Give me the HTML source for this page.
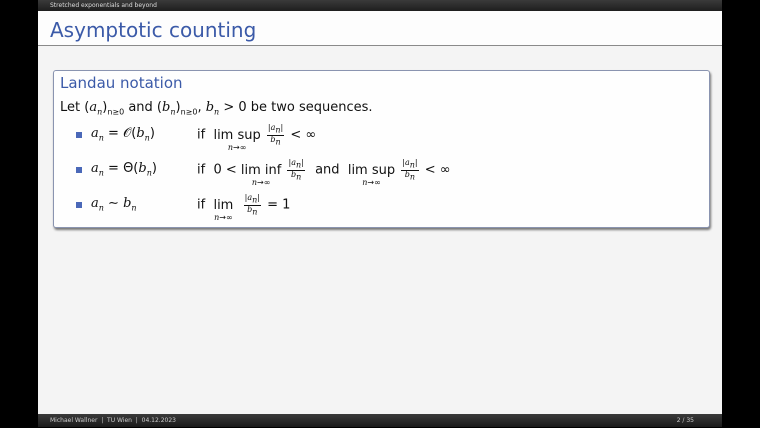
<!DOCTYPE html>
<html><head><meta charset="utf-8"><style>
*{margin:0;padding:0;box-sizing:border-box}
body{width:760px;height:427px;background:#000;position:relative;overflow:hidden;font-family:"DejaVu Sans","Liberation Sans",sans-serif}
#slide{position:absolute;left:38px;top:0;width:684px;height:427px;background:#f4f4f4}
#top{position:absolute;left:0;top:0;width:684px;height:11px;background:linear-gradient(#3a3a3a,#1e1e1e);color:#ddd;font-size:6px;line-height:11px;padding-left:12px}
#title{position:absolute;left:0;top:11px;width:684px;height:35px;background:#fdfdfd;border-bottom:1px solid #8a8a8a;color:#3b5aa8;font-size:20px;line-height:38px;padding-left:12px}
#box{position:absolute;left:15px;top:70px;width:657px;height:158px;background:#fefefe;border:1px solid #8a94b0;border-radius:3px;box-shadow:1px 2px 2px #777}
.bt{position:absolute;left:6px;top:3px;color:#3b5aa8;font-size:15px}
.t{position:absolute;font-size:13px;color:#111;white-space:nowrap}
i{font-family:"DejaVu Serif","Liberation Serif",serif;font-style:italic}
sub{font-size:8px}
.sq{position:absolute;width:6px;height:6px;background:#4a68b8}
.lim{display:inline-block;position:relative;text-align:center}
.lim .u{position:absolute;left:50%;transform:translateX(-50%);top:15px;font-size:8px}
.fr{display:inline-block;vertical-align:middle;font-size:8px;text-align:center;line-height:8px;margin:0 2px}
.fr span{display:block}
.fr .n{border-bottom:0.6px solid #111;padding:0 1px}
#foot{position:absolute;left:0;top:414px;width:684px;height:13px;background:linear-gradient(#3a3a3a,#1a1a1a);color:#ccc;font-size:6px;line-height:14px;padding-left:12px}
#foot .r{position:absolute;right:28px;top:0}
</style></head><body>
<div id="slide">
<div id="top">Stretched exponentials and beyond</div>
<div id="title">Asymptotic counting</div>
<div id="box">
<div class="bt">Landau notation</div>
<div class="t" style="left:6px;top:29px">Let (<i>a<sub>n</sub></i>)<sub>n≥0</sub> and (<i>b<sub>n</sub></i>)<sub>n≥0</sub>, <i>b<sub>n</sub></i> &gt; 0 be two sequences.</div>
<div class="sq" style="left:22px;top:61px"></div>
<div class="t" style="left:37px;top:55px"><i>a<sub>n</sub></i> = 𝒪(<i>b<sub>n</sub></i>)</div>
<div class="t" style="left:143px;top:53px">if &nbsp;<span class="lim">lim sup<span class="u"><i>n</i>→∞</span></span> <span class="fr"><span class="n">|<i>a<sub>n</sub></i>|</span><span><i>b<sub>n</sub></i></span></span> &lt; ∞</div>
<div class="sq" style="left:22px;top:96px"></div>
<div class="t" style="left:37px;top:90px"><i>a<sub>n</sub></i> = Θ(<i>b<sub>n</sub></i>)</div>
<div class="t" style="left:143px;top:88px">if &nbsp;0 &lt; <span class="lim">lim inf<span class="u"><i>n</i>→∞</span></span> <span class="fr"><span class="n">|<i>a<sub>n</sub></i>|</span><span><i>b<sub>n</sub></i></span></span> &nbsp;and &nbsp;<span class="lim">lim sup<span class="u"><i>n</i>→∞</span></span> <span class="fr"><span class="n">|<i>a<sub>n</sub></i>|</span><span><i>b<sub>n</sub></i></span></span> &lt; ∞</div>
<div class="sq" style="left:22px;top:131px"></div>
<div class="t" style="left:37px;top:125px"><i>a<sub>n</sub></i> ∼ <i>b<sub>n</sub></i></div>
<div class="t" style="left:143px;top:123px">if &nbsp;<span class="lim">lim<span class="u"><i>n</i>→∞</span></span> &nbsp;<span class="fr"><span class="n">|<i>a<sub>n</sub></i>|</span><span><i>b<sub>n</sub></i></span></span> = 1</div>
</div>
<div id="foot">Michael Wallner &nbsp;|&nbsp; TU Wien &nbsp;|&nbsp; 04.12.2023<span class="r">2 / 35</span></div>
</div>
</body></html>
